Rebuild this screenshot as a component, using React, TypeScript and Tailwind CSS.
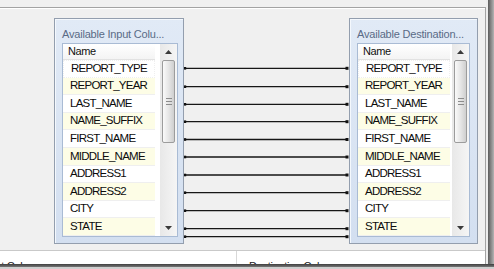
import React from "react";

const items = [
  "REPORT_TYPE",
  "REPORT_YEAR",
  "LAST_NAME",
  "NAME_SUFFIX",
  "FIRST_NAME",
  "MIDDLE_NAME",
  "ADDRESS1",
  "ADDRESS2",
  "CITY",
  "STATE",
];

const font = { fontFamily: '"Liberation Sans", Arial, sans-serif' };

function ScrollBar() {
  return (
    <div className="w-[17px] shrink-0 flex flex-col bg-gradient-to-r from-[#e8e8e8] to-[#f5f5f5]">
      <div className="h-[16px] flex items-center justify-center">
        <svg width="7" height="4" viewBox="0 0 7 4">
          <path d="M0 4 L3.5 0 L7 4 Z" fill="#3a3a3a" />
        </svg>
      </div>
      <div className="flex-1">
        <div className="mx-[2px] h-[83px] rounded-[2px] border border-[#9c9c9c] bg-gradient-to-r from-[#fafafa] via-[#e6e6e6] to-[#cfcfcf] flex flex-col items-center justify-center gap-[2px]">
          <div className="w-[6px] h-px bg-[#8c8c8c]" />
          <div className="w-[6px] h-px bg-[#8c8c8c]" />
          <div className="w-[6px] h-px bg-[#8c8c8c]" />
        </div>
      </div>
      <div className="h-[16px] flex items-center justify-center">
        <svg width="7" height="4" viewBox="0 0 7 4">
          <path d="M0 0 L3.5 4 L7 0 Z" fill="#3a3a3a" />
        </svg>
      </div>
    </div>
  );
}

function Panel({
  title,
  width,
  listWidth,
}: {
  title: string;
  width: string;
  listWidth: string;
}) {
  return (
    <div
      className={`${width} h-[226px] shrink-0 border border-[#939eae] bg-gradient-to-b from-[#e1eaf6] to-[#d3dff0] shadow-[inset_1px_1px_0_#f4f8fd] flex flex-col pl-[7px]`}
      style={font}
    >
      <div className="h-[24px] pt-[9.5px] text-[11px] leading-none tracking-[-0.2px] text-[#5a6b86] whitespace-nowrap">
        {title}
      </div>
      <div className={`${listWidth} h-[194px] border border-[#a9bbd4] bg-white flex justify-between`}>
        <div className="w-[92px] flex flex-col">
          <div className="h-[16px] border-b border-[#e2e2e2] bg-gradient-to-b from-white to-[#f4f4f4] pl-[5px] flex items-center text-[11px] leading-none tracking-[-0.4px] text-[#111]">
            Name
          </div>
          {items.map((it, i) => (
            <div
              key={it}
              className={`h-[17.6px] flex items-center pl-[7px] text-[11.5px] leading-none tracking-[-0.75px] text-[#0c0c0c] border-b border-[#efefef] ${
                i % 2 === 1 ? "bg-[#fdfde6]" : "bg-white"
              } ${i === 0 ? "border border-dotted border-[#3a3a3a] pl-[6px]" : ""}`}
            >
              {it}
            </div>
          ))}
        </div>
        <ScrollBar />
      </div>
    </div>
  );
}

const lineYs = [50.3, 68.7, 86.3, 103.7, 121.5, 139, 157, 174.7, 192.7, 210.7, 218.7];

function Connectors() {
  return (
    <div className="w-[165px] h-[226px] shrink-0">
      <svg width="165" height="226" viewBox="0 0 165 226">
        {lineYs.map((y) => (
          <g key={y}>
            <line x1="0" y1={y} x2="164" y2={y} stroke="#161616" strokeWidth="1.3" />
            <rect x="0" y={y - 1.3} width="2.2" height="2.6" fill="#111" />
            <rect x="161.5" y={y - 1.5} width="3" height="3" fill="#111" />
          </g>
        ))}
      </svg>
    </div>
  );
}

export default function App() {
  return (
    <div className="w-[494px] h-[269px] bg-[#f0f0f0] overflow-hidden flex flex-col" style={font}>
      <div className="flex h-[264px]">
        <div className="w-[485px] flex flex-col">
          <div className="h-[7px]" />
          <div className="h-px bg-[#a3a3a3]" />
          <div className="h-px bg-white" />
          <div className="h-[241px] flex pl-[54px] pt-[9px]">
            <Panel title="Available Input Colu..." width="w-[130px]" listWidth="w-[116px]" />
            <Connectors />
            <Panel title="Available Destination..." width="w-[129px]" listWidth="w-[113px]" />
          </div>
          <div className="h-px bg-[#c9c9c9]" />
          <div className="h-[13px] bg-white flex overflow-hidden text-[11px] leading-none text-[#222]">
            <div className="w-[237px] shrink-0 border-r border-[#d8d8d8] pt-[9.5px] overflow-hidden whitespace-nowrap">
              <span className="ml-[-19px] inline-block tracking-[-0.3px]">Input Column</span>
            </div>
            <div className="pt-[9.5px] pl-[12px] whitespace-nowrap tracking-[-0.3px]">Destination Column</div>
          </div>
        </div>
        <div className="w-px mt-[7px] bg-[#a3a3a3]" />
        <div className="w-[2px] bg-[#ededed]" />
        <div className="w-[6px] bg-gradient-to-r from-[#5c5c5c] to-[#b4b4b4]" />
      </div>
      <div className="h-[3px] bg-gradient-to-b from-[#3e3e3e] to-[#777]" />
      <div className="h-[2px] bg-[#cfcfcf]" />
    </div>
  );
}
